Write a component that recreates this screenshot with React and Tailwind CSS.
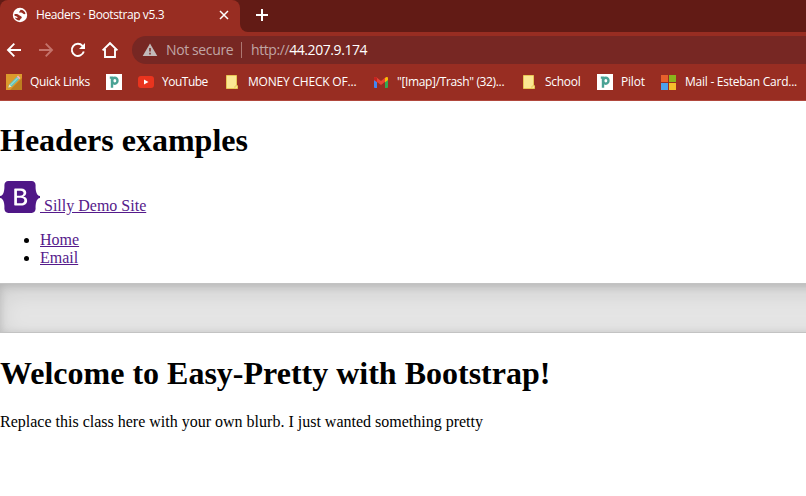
const ui = "font-['Open_Sans',sans-serif]";

function Globe() {
  return (
    <svg width="16" height="16" viewBox="0 0 16 16" className="block shrink-0">
      <circle cx="8" cy="8" r="7.2" fill="#fff" />
      <path d="M8.6 2.8C11 2.8 13.2 4.6 13.5 6.8C12.6 7.4 11.6 7.2 11 6.6C10.2 5.8 8.6 6.4 7.4 5.6C6.6 4.8 8 4.4 8.6 2.8Z" fill="#982d22" />
      <path d="M2.4 7.2C4.2 6.6 6 7.2 7.2 8.2C8.2 9 10 9 9.8 10.4C9.6 11.6 8.4 11.4 8.2 12.4L7.4 13.4C5.4 13.2 3.6 12.2 2.8 10.4C4 10.8 5.2 11.2 5.8 10.6C5 9.4 3.2 9.4 2.4 8.6Z" fill="#982d22" />
    </svg>
  );
}

function Arrow({ className }) {
  return (
    <svg width="20" height="20" viewBox="0 0 20 20" className={`block shrink-0 ${className}`}>
      <path d="M17 10H4M10.3 3.7L4 10L10.3 16.3" fill="none" stroke="currentColor" strokeWidth="1.9" />
    </svg>
  );
}

function Reload() {
  return (
    <svg width="20" height="20" viewBox="0 0 20 20" className="ml-3 block shrink-0">
      <path d="M15.8 11.6A6.1 6.1 0 1 1 14.5 5.8L16 7.3" fill="none" stroke="#fff" strokeWidth="1.9" />
      <path d="M17 3V9H11Z" fill="#fff" />
    </svg>
  );
}

function Note() {
  return (
    <svg width="12" height="14" viewBox="0 0 12 14" className="block shrink-0">
      <path d="M0.5 0.5H10.5V10L11.5 11V13.5H0.5Z" fill="#fbe793" stroke="#e8c655" />
      <path d="M9 13.5V11H11.5" fill="#fff3b5" stroke="#e8c655" />
    </svg>
  );
}

function PIcon() {
  return (
    <svg width="16" height="16" viewBox="0 0 16 16" className="block shrink-0">
      <rect width="16" height="16" fill="#fff" />
      <path d="M3.8 3.6H6V13.8" fill="none" stroke="#4aa395" strokeWidth="2.4" />
      <ellipse cx="8.8" cy="6.7" rx="2.7" ry="3" fill="none" stroke="#4aa395" strokeWidth="2.4" />
    </svg>
  );
}

function Pencil() {
  return (
    <svg width="16" height="16" viewBox="0 0 16 16" className="block shrink-0">
      <rect width="16" height="16" fill="#dc9a2c" />
      <path d="M16 4V16H4Z" fill="#bd7e20" />
      <path d="M3.2 10.4L10.8 2.8L13.2 5.2L5.6 12.8L2.4 13.6Z" fill="#63c5bd" />
      <path d="M10.8 2.8L12 1.6L14.4 4L13.2 5.2Z" fill="#f3b3c6" />
      <path d="M3.2 10.4L5.6 12.8L2.4 13.6Z" fill="#f7e3b4" />
      <path d="M4.3 11.3L11.6 4" stroke="#b5ece0" strokeWidth="0.9" />
    </svg>
  );
}

function Gmail() {
  return (
    <svg width="14" height="11" viewBox="0 0 14 11" className="block shrink-0">
      <path d="M0 2V10Q0 11 1 11H3V4Z" fill="#4285f4" />
      <path d="M14 2V10Q14 11 13 11H11V4Z" fill="#34a853" />
      <path d="M0 3V1.3C0 0 1.5 -0.4 2.6 0.6L7 4L11.2 0.6V4.8L7 8L3 5Z" fill="#ea4335" />
      <path d="M0 3V1.3C0 0 1.5 -0.4 3 0.9V5Z" fill="#c5221f" />
      <path d="M11 0.9C12.5 -0.4 14 0 14 1.3V3L11 5.2Z" fill="#fbbc04" />
    </svg>
  );
}

function Label({ text, box }) {
  return <span className={`block shrink-0 whitespace-nowrap text-[12px] leading-4 text-white ${box}`}>{text}</span>;
}

export default function App() {
  return (
    <div className="h-[496px] w-[806px] overflow-hidden bg-white">
      <header className={`h-[101px] border-b border-[#b1473d] bg-[#982d22] ${ui}`}>
        <div className="flex h-8 bg-[#621b15]">
          <div className="flex h-8 w-60 shrink-0 items-center rounded-t-lg bg-[#982d22] pb-0.5 pl-3">
            <Globe />
            <Label text="Headers · Bootstrap v5.3" box="ml-2 w-[184px] tracking-[-0.4px]" />
            <svg width="8" height="8" viewBox="0 0 8 8" className="block overflow-visible"><path d="M0 0L8 8M8 0L0 8" stroke="#fff" strokeWidth="1.5" /></svg>
          </div>
          <div className="h-8 flex-1 bg-[#982d22]">
            <div className="flex h-8 items-center rounded-bl-lg bg-[#621b15] pl-4">
              <svg width="12" height="12" viewBox="0 0 12 12" className="-mt-0.5 block"><path d="M0 6H12M6 0V12" stroke="#fff" strokeWidth="2" /></svg>
            </div>
          </div>
        </div>
        <div className="flex h-9 items-center pl-[4px]">
          <Arrow className="text-white" />
          <Arrow className="ml-3 -scale-x-100 text-[#c4736b]" />
          <Reload />
          <svg width="18" height="18" viewBox="0 0 18 18" className="ml-[13px] block shrink-0"><path d="M1.6 9.4L9 2.2L16.4 9.4M4 8V16H14V8" fill="none" stroke="#fff" strokeWidth="1.9" /></svg>
          <div className="ml-[13px] flex h-7 flex-1 items-center rounded-l-full bg-[#772723] pl-[10px] text-[14px] leading-5 text-[#c0a5a4]">
            <svg width="16" height="16" viewBox="0 0 16 16" className="block shrink-0">
              <path d="M8 1.5L15.3 14H0.7Z" fill="#c2b9b9" />
              <path d="M8 6V9.6M8 10.8V12.4" stroke="#772723" strokeWidth="1.5" />
            </svg>
            <span className="ml-2 w-[75px] shrink-0 whitespace-nowrap tracking-[-0.38px]">Not secure</span>
            <span className="h-4 w-px bg-[#ad7771]" />
            <span className="ml-[9px] whitespace-nowrap tracking-[-0.42px]">http://<span className="text-white">44.207.9.174</span></span>
          </div>
        </div>
        <div className="flex h-7 items-center pl-[6px]">
          <Pencil />
          <Label text="Quick Links" box="ml-2 w-[76px] tracking-[-0.33px]" />
          <PIcon />
          <svg width="16" height="12" viewBox="0 0 16 12" className="ml-4 block shrink-0"><rect width="16" height="12" rx="3" fill="#e9341e" /><path d="M6 3.5L10.5 6L6 8.5Z" fill="#fff" /></svg>
          <Label text="YouTube" box="ml-2 w-[64px] tracking-[-0.5px]" />
          <Note />
          <Label text="MONEY CHECK OF..." box="ml-[10px] w-[126px] tracking-[-0.2px]" />
          <Gmail />
          <Label text={'"[Imap]/Trash" (32)...'} box="ml-[9px] w-[126px] tracking-[-0.35px]" />
          <Note />
          <Label text="School" box="ml-[10px] w-[52px] tracking-[-0.3px]" />
          <PIcon />
          <Label text="Pilot" box="ml-2 w-10 tracking-[-0.2px]" />
          <div className="grid size-[15px] shrink-0 grid-cols-2 gap-px">
            <i className="bg-[#e8602c]" /><i className="bg-[#8ab51c]" /><i className="bg-[#4da1ec]" /><i className="bg-[#f5bd2b]" />
          </div>
          <Label text="Mail - Esteban Card..." box="ml-[9px] tracking-[-0.25px]" />
        </div>
      </header>
      <main className="flow-root font-['Liberation_Serif',serif] text-base leading-[18px] text-black">
        <h1 className="mt-[21px] text-[32px] font-bold leading-[37px]">Headers examples</h1>
        <div className="mt-[22px] flex h-[34px] items-end text-[#551a8b]">
          <svg width="40" height="32" viewBox="0 0 118 94" className="mb-[2px] block shrink-0">
            <path fill="#4f1787" fillRule="evenodd" clipRule="evenodd" d="M24.509 0c-6.733 0-11.715 5.893-11.492 12.284.214 6.14-.064 14.092-2.066 20.577C8.943 39.365 5.547 43.485 0 44.014v5.972c5.547.529 8.943 4.649 10.951 11.153 2.002 6.485 2.28 14.437 2.066 20.577C12.794 88.106 17.776 94 24.51 94H93.5c6.733 0 11.714-5.893 11.491-12.284-.214-6.14.064-14.092 2.066-20.577 2.009-6.504 5.396-10.624 10.943-11.153v-5.972c-5.547-.529-8.934-4.649-10.943-11.153-2.002-6.484-2.28-14.437-2.066-20.577C105.214 5.894 100.233 0 93.5 0H24.508zM80 57.863C80 66.663 73.436 72 62.543 72H44a2 2 0 01-2-2V24a2 2 0 012-2h18.437c9.083 0 15.044 4.92 15.044 12.474 0 5.302-4.01 10.049-9.119 10.88v.277C75.317 46.394 80 51.21 80 57.863zM60.521 28.34H49.948v14.934h8.905c6.884 0 10.68-2.772 10.68-7.727 0-4.643-3.264-7.207-9.012-7.207zM49.948 49.2v16.458H60.91c7.167 0 10.964-2.876 10.964-8.281 0-5.406-3.903-8.178-11.425-8.178H49.948z" />
          </svg>
          <a className="whitespace-pre underline"> Silly Demo Site</a>
        </div>
        <ul className="mt-4 list-disc pl-10">
          <li><a className="text-[#551a8b] underline">Home</a></li>
          <li><a className="text-[#551a8b] underline">Email</a></li>
        </ul>
        <div className="-mr-10 mt-4 h-[50px] border-y border-black/15 bg-black/10 shadow-[inset_0_8px_24px_rgba(0,0,0,0.1),inset_0_2px_8px_rgba(0,0,0,0.15)]" />
        <h1 className="mt-[22px] text-[32px] font-bold leading-[37px]">Welcome to Easy-Pretty with Bootstrap!</h1>
        <p className="mt-[21px]">Replace this class here with your own blurb. I just wanted something pretty</p>
      </main>
    </div>
  );
}
